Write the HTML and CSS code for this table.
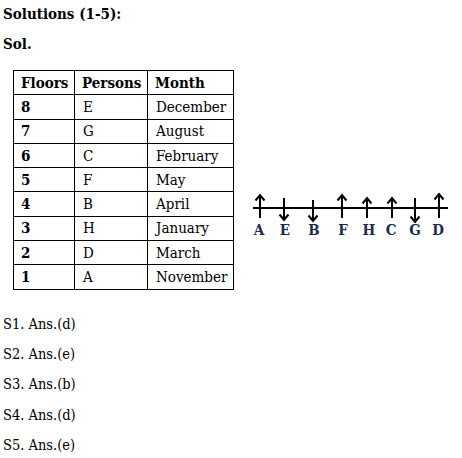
FILE: index.html
```html
<!DOCTYPE html>
<html>
<head>
<meta charset="utf-8">
<link rel="stylesheet" href="styles.css">
</head>
<body>
<p class="heading">Solutions (1-5):</p>
<p class="heading sol">Sol.</p>
<div class="row">
  <table class="grid">
    <tr><th class="c1">Floors</th><th class="c2">Persons</th><th class="c3">Month</th></tr>
    <tr><td class="num">8</td><td>E</td><td>December</td></tr>
    <tr><td class="num">7</td><td>G</td><td>August</td></tr>
    <tr><td class="num">6</td><td>C</td><td>February</td></tr>
    <tr><td class="num">5</td><td>F</td><td>May</td></tr>
    <tr><td class="num">4</td><td>B</td><td>April</td></tr>
    <tr><td class="num">3</td><td>H</td><td>January</td></tr>
    <tr><td class="num">2</td><td>D</td><td>March</td></tr>
    <tr><td class="num">1</td><td>A</td><td>November</td></tr>
  </table>
  <svg class="diagram" width="210" height="219" viewBox="0 0 210 219">
    <g stroke="#000" stroke-width="2" fill="none" stroke-linecap="butt">
      <line x1="9" y1="138" x2="204" y2="138"/>
      <path d="M16 148 V125 M11.5 130.5 L16 125 L20.5 130.5"/>
      <path d="M40 128 V150 M35.5 144.5 L40 150 L44.5 144.5"/>
      <path d="M69 130 V151 M64.5 145.5 L69 151 L73.5 145.5"/>
      <path d="M98 148 V125 M93.5 130.5 L98 125 L102.5 130.5"/>
      <path d="M123 148 V128 M118.5 133.5 L123 128 L127.5 133.5"/>
      <path d="M148 148 V128 M143.5 133.5 L148 128 L152.5 133.5"/>
      <path d="M171 128 V152 M166.5 146.5 L171 152 L175.5 146.5"/>
      <path d="M195 148 V124 M190.5 129.5 L195 124 L199.5 129.5"/>
    </g>
    <g class="letters" text-anchor="middle">
      <text x="15" y="165">A</text>
      <text x="41" y="165">E</text>
      <text x="70" y="165">B</text>
      <text x="99" y="165">F</text>
      <text x="125" y="165">H</text>
      <text x="147" y="165">C</text>
      <text x="171" y="165">G</text>
      <text x="194" y="165">D</text>
    </g>
  </svg>
</div>
<div class="answers">
  <p class="ans">S1. Ans.(d)</p>
  <p class="ans">S2. Ans.(e)</p>
  <p class="ans">S3. Ans.(b)</p>
  <p class="ans">S4. Ans.(d)</p>
  <p class="ans">S5. Ans.(e)</p>
</div>
</body>
</html>
```
FILE: styles.css
```css
html, body {
  margin: 0;
  padding: 0;
  background: #fff;
}
body {
  padding: 4px 3px 0 3px;
  font-family: "DejaVu Serif", "Liberation Serif", serif;
  font-stretch: condensed;
  color: #000;
  font-size: 14px;
}
p { margin: 0; }
.heading {
  font-weight: bold;
  font-size: 15px;
  line-height: 20px;
}
.sol { margin-top: 10px; }
.row {
  display: flex;
  align-items: flex-start;
  margin-top: 16px;
  margin-left: 10px;
}
.grid {
  flex: none;
  border-collapse: collapse;
  font-size: 15px;
}
.grid th, .grid td {
  border: 1px solid #000;
  height: 23.3px;
  padding: 0 0 0 7px;
  text-align: left;
  vertical-align: middle;
  line-height: 18px;
  white-space: nowrap;
}
.grid th { font-weight: bold; }
.grid td { padding-left: 8px; }
.grid td.num { font-weight: bold; padding-left: 7px; }
.c1 { width: 53px; }
.c2 { width: 65px; }
.c3 { width: 78px; }
.diagram {
  display: block;
  margin-left: 10px;
  flex: none;
}
.letters {
  font-family: "DejaVu Serif", "Liberation Serif", serif;
  font-stretch: condensed;
  font-weight: bold;
  font-size: 15px;
  fill: #1a2b4c;
}
.answers { margin-top: 19px; }
.ans {
  font-size: 14.5px;
  line-height: 30.3px;
}
```
